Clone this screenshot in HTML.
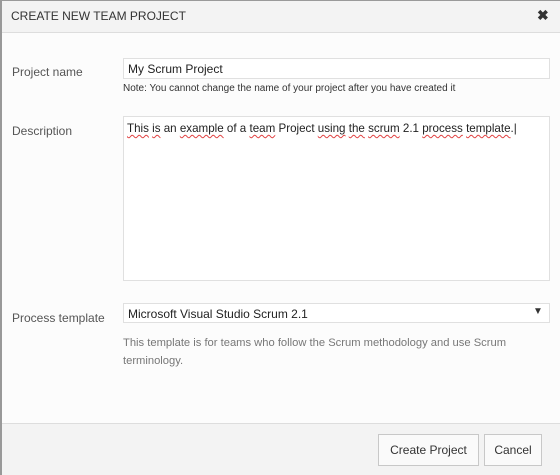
<!DOCTYPE html>
<html><head><style>
body{margin:0;width:560px;height:475px;overflow:hidden;font-family:"Liberation Sans",sans-serif;background:#fcfcfc;position:relative}
.ab{position:absolute}
.lbl{font-size:12px;color:#555}
.box{position:absolute;background:#fff;border:1px solid #e0e0e0;box-sizing:border-box;font-size:12px;color:#222}
.btn{position:absolute;background:#fafafa;border:1px solid #c8c8c8;box-sizing:border-box;font-size:12px;color:#333;text-align:center;line-height:30px}
u{text-decoration:underline wavy #e04040;text-decoration-thickness:1px;text-underline-offset:2px}
</style></head><body>
<div class="ab" style="left:0;top:0;width:560px;height:33px;background:#f3f3f3;border-bottom:1px solid #ddd;box-sizing:border-box"></div>
<div class="ab" style="left:0;top:0;width:2px;height:475px;background:#999"></div>
<div class="ab" style="left:0;top:0;width:560px;height:1px;background:#9a9a9a"></div>
<div class="ab" style="left:11px;top:9px;font-size:12px;color:#333">CREATE NEW TEAM PROJECT</div>
<div class="ab" style="left:537px;top:7px;font-size:14px;font-weight:bold;color:#333">✖</div>

<div class="ab lbl" style="left:12px;top:65px">Project name</div>
<div class="box" style="left:123px;top:58px;width:427px;height:21px;padding:3px 0 0 4px">My Scrum Project</div>
<div class="ab" style="left:123px;top:83px;font-size:10px;color:#333">Note: You cannot change the name of your project after you have created it</div>

<div class="ab lbl" style="left:12px;top:124px">Description</div>
<div class="box" style="left:123px;top:116px;width:427px;height:165px;padding:5px 0 0 3px;font-size:11.6px"><u>This</u> <u>is</u> an <u>example</u> of a <u>team</u> Project <u>using</u> <u>the</u> <u>scrum</u> 2.1 <u>process</u> <u>template</u>.|</div>

<div class="ab lbl" style="left:12px;top:311px">Process template</div>
<div class="box" style="left:123px;top:303px;width:427px;height:20px;padding:3px 0 0 4px">Microsoft Visual Studio Scrum 2.1</div>
<div class="ab" style="left:533px;top:306px;font-size:10px;color:#333">▼</div>
<div class="ab" style="left:123px;top:334px;font-size:11.2px;color:#777;line-height:18px;width:400px">This template is for teams who follow the Scrum methodology and use Scrum terminology.</div>

<div class="ab" style="left:0;top:423px;width:560px;height:52px;background:#f3f3f3;border-top:1px solid #ddd;box-sizing:border-box"></div>
<div class="ab" style="left:0;top:423px;width:2px;height:52px;background:#999"></div>
<div class="btn" style="left:378px;top:434px;width:101px;height:32px">Create Project</div>
<div class="btn" style="left:484px;top:434px;width:58px;height:32px">Cancel</div>
</body></html>
